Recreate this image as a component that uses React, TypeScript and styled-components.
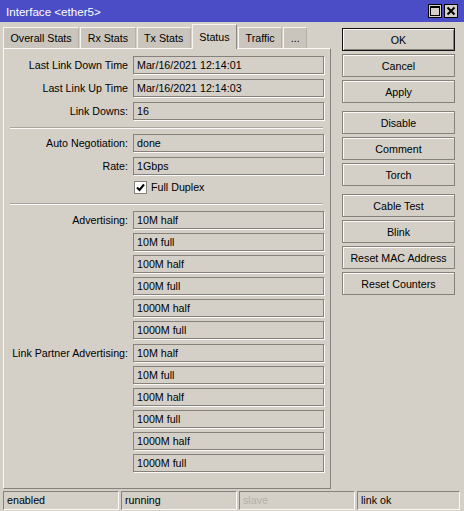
import React from 'react'
import styled, { createGlobalStyle } from 'styled-components'

const GlobalStyle = createGlobalStyle`
  html, body {
    margin: 0;
    padding: 0;
    background: #d4d0c8;
  }
  body {
    font-family: "Liberation Sans", Arial, sans-serif;
    font-size: 10.7px;
    color: #000;
  }
  * { box-sizing: border-box; }
`

const topRows = [
  { label: 'Last Link Down Time', value: 'Mar/16/2021 12:14:01' },
  { label: 'Last Link Up Time', value: 'Mar/16/2021 12:14:03' },
  { label: 'Link Downs:', value: '16' },
]

const speeds = ['10M half', '10M full', '100M half', '100M full', '1000M half', '1000M full']

const tabs = ['Overall Stats', 'Rx Stats', 'Tx Stats', 'Status', 'Traffic', '...']

const buttonGroups = [
  ['OK', 'Cancel', 'Apply'],
  ['Disable', 'Comment', 'Torch'],
  ['Cable Test', 'Blink', 'Reset MAC Address', 'Reset Counters'],
]

export default function App() {
  return (
    <Window>
      <GlobalStyle />
      <TitleBar>
        <span>Interface &lt;ether5&gt;</span>
        <TitleButtons>
          <TitleButton>
            <svg width="10" height="10" viewBox="0 0 10 10">
              <rect x="0.5" y="0.5" width="9" height="9" fill="none" stroke="#000" />
              <rect x="0" y="0" width="10" height="2" fill="#000" />
            </svg>
          </TitleButton>
          <TitleButton>
            <svg width="10" height="10" viewBox="0 0 10 10">
              <path d="M1.5 1.5 L8.5 8.5 M8.5 1.5 L1.5 8.5" stroke="#000" strokeWidth="2" />
            </svg>
          </TitleButton>
        </TitleButtons>
      </TitleBar>

      <Body>
        <LeftColumn>
          <TabRow>
            {tabs.map((t) => (
              <Tab key={t} $active={t === 'Status'}>
                {t}
              </Tab>
            ))}
          </TabRow>
          <Panel>
            <Form $gap={5}>
              {topRows.map((r) => (
                <React.Fragment key={r.label}>
                  <Label>{r.label}</Label>
                  <Field>{r.value}</Field>
                </React.Fragment>
              ))}
            </Form>
            <Rule $top={7} $bottom={5} />
            <Form $gap={5}>
              <Label>Auto Negotiation:</Label>
              <Field>done</Field>
              <Label>Rate:</Label>
              <Field>1Gbps</Field>
              <span />
              <CheckRow>
                <CheckBox>
                  <svg width="9" height="9" viewBox="0 0 9 9">
                    <path d="M1 4.5 L3.5 7 L8 1.5" fill="none" stroke="#000" strokeWidth="2" />
                  </svg>
                </CheckBox>
                Full Duplex
              </CheckRow>
            </Form>
            <Rule $top={7} $bottom={6} />
            <Form $gap={4.1}>
              {speeds.map((s, i) => (
                <React.Fragment key={'a' + s}>
                  <Label>{i === 0 ? 'Advertising:' : ''}</Label>
                  <Field>{s}</Field>
                </React.Fragment>
              ))}
              {speeds.map((s, i) => (
                <React.Fragment key={'p' + s}>
                  <Label>{i === 0 ? 'Link Partner Advertising:' : ''}</Label>
                  <Field>{s}</Field>
                </React.Fragment>
              ))}
            </Form>
          </Panel>
        </LeftColumn>

        <ButtonColumn>
          {buttonGroups.map((g, i) => (
            <ButtonGroup key={i}>
              {g.map((b) => (
                <Button key={b} $default={b === 'OK'}>
                  {b}
                </Button>
              ))}
            </ButtonGroup>
          ))}
        </ButtonColumn>
      </Body>

      <StatusBar>
        <StatusCell>enabled</StatusCell>
        <StatusCell>running</StatusCell>
        <StatusCell $muted>slave</StatusCell>
        <StatusCell>link ok</StatusCell>
      </StatusBar>
    </Window>
  )
}

const Window = styled.div`
  width: 464px;
  height: 511px;
  display: flex;
  flex-direction: column;
  background: #d4d0c8;
  overflow: hidden;
`

const TitleBar = styled.div`
  height: 22px;
  flex: none;
  display: flex;
  align-items: center;
  justify-content: space-between;
  padding: 0 6px 0 6px;
  background: #4b4dc6;
  color: #fff;
  font-size: 11.6px;
`

const TitleButtons = styled.div`
  display: flex;
  gap: 2px;
`

const TitleButton = styled.div`
  width: 14px;
  height: 14px;
  border: 1px solid #000;
  background: #d4d0c8;
  display: flex;
  align-items: center;
  justify-content: center;
`

const Body = styled.div`
  flex: 1;
  min-height: 0;
  display: flex;
  padding: 2px 0 0 3px;
  border-left: 1px solid #f4f2ee;
  margin-left: -1px;
`

const LeftColumn = styled.div`
  width: 328px;
  display: flex;
  flex-direction: column;
`

const TabRow = styled.div`
  height: 24px;
  flex: none;
  display: flex;
  align-items: flex-end;
  gap: 1px;
`

const Tab = styled.div<{ $active?: boolean }>`
  position: relative;
  display: flex;
  align-items: center;
  padding: 0 6.5px;
  height: ${(p) => (p.$active ? 25 : 21)}px;
  margin-bottom: ${(p) => (p.$active ? -1 : 0)}px;
  z-index: ${(p) => (p.$active ? 1 : 0)};
  background: ${(p) => (p.$active ? '#d4d0c8' : '#c9c5bd')};
  border-top: 1px solid #f6f5f2;
  border-left: 1px solid #f6f5f2;
  border-right: 1px solid ${(p) => (p.$active ? '#8a8780' : '#b5b1a9')};
  white-space: nowrap;
`

const Panel = styled.div`
  flex: 1;
  display: flex;
  flex-direction: column;
  padding: 7px 6px 0 4px;
  border-top: 1px solid #fbfaf8;
  border-left: 1px solid #fbfaf8;
  border-right: 1px solid #85827c;
  border-bottom: 1px solid #85827c;
`

const Form = styled.div<{ $gap: number }>`
  display: grid;
  grid-template-columns: 120px 191px;
  column-gap: 5px;
  row-gap: ${(p) => p.$gap}px;
`

const Label = styled.div`
  height: 18px;
  line-height: 18px;
  text-align: right;
  white-space: nowrap;
`

const Field = styled.div`
  height: 18px;
  line-height: 16px;
  padding: 0 3px;
  border: 1px solid #85827c;
  box-shadow: 1px 1px 0 #fbfaf8;
  white-space: nowrap;
`

const Rule = styled.div<{ $top: number; $bottom: number }>`
  margin: ${(p) => p.$top}px 0 ${(p) => p.$bottom}px 2px;
  width: 313px;
  border-top: 1px solid #a9a6a0;
  border-bottom: 1px solid #fbfaf8;
`

const CheckRow = styled.div`
  height: 18px;
  margin-top: -2px;
  display: flex;
  align-items: center;
  gap: 4px;
  padding-left: 1px;
`

const CheckBox = styled.div`
  width: 13px;
  height: 13px;
  background: #fff;
  border: 1px solid #85827c;
  display: flex;
  align-items: center;
  justify-content: center;
`

const ButtonColumn = styled.div`
  margin-left: 11px;
  padding-top: 4px;
  width: 113px;
  display: flex;
  flex-direction: column;
  gap: 8px;
`

const ButtonGroup = styled.div`
  display: flex;
  flex-direction: column;
  gap: 3px;
`

const Button = styled.div<{ $default?: boolean }>`
  height: 23px;
  display: flex;
  align-items: center;
  justify-content: center;
  white-space: nowrap;
  border: 1px solid ${(p) => (p.$default ? '#111' : '#85827c')};
  box-shadow: inset 1px 1px 0 #fbfaf8
    ${(p) => (p.$default ? ', inset -1px -1px 0 #85827c' : '')};
`

const StatusBar = styled.div`
  height: 19px;
  flex: none;
  margin: 2px 0 1px;
  padding: 0 4px 0 3px;
  display: grid;
  grid-template-columns: 116px 116px 116px 1fr;
  column-gap: 2px;
`

const StatusCell = styled.div<{ $muted?: boolean }>`
  padding: 0 3px;
  line-height: 17px;
  border-top: 1px solid #85827c;
  border-left: 1px solid #85827c;
  border-bottom: 1px solid #fbfaf8;
  border-right: 1px solid #fbfaf8;
  color: ${(p) => (p.$muted ? '#b3afa8' : '#000')};
`
